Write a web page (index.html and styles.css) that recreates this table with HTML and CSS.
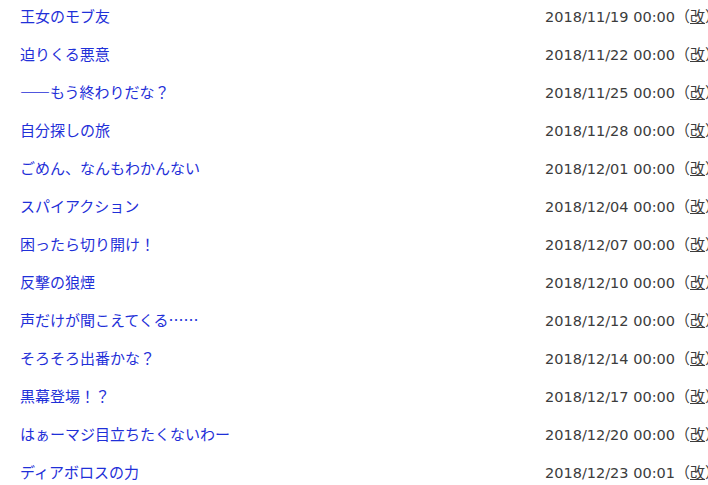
FILE: index.html
```html
<!DOCTYPE html>
<html lang="ja">
<head>
    <meta charset="UTF-8">
    <title>目次</title>
    <link rel="stylesheet" href="styles.css">
</head>
<body>
    <div class="index-box">
        <dl class="chapter"><dd class="subtitle"><a href="#">王女のモブ友</a></dd><dt class="update">2018/11/19 00:00<span class="kai">（<u>改</u>）</span></dt></dl>
        <dl class="chapter"><dd class="subtitle"><a href="#">迫りくる悪意</a></dd><dt class="update">2018/11/22 00:00<span class="kai">（<u>改</u>）</span></dt></dl>
        <dl class="chapter"><dd class="subtitle"><a href="#">――もう終わりだな？</a></dd><dt class="update">2018/11/25 00:00<span class="kai">（<u>改</u>）</span></dt></dl>
        <dl class="chapter"><dd class="subtitle"><a href="#">自分探しの旅</a></dd><dt class="update">2018/11/28 00:00<span class="kai">（<u>改</u>）</span></dt></dl>
        <dl class="chapter"><dd class="subtitle"><a href="#">ごめん、なんもわかんない</a></dd><dt class="update">2018/12/01 00:00<span class="kai">（<u>改</u>）</span></dt></dl>
        <dl class="chapter"><dd class="subtitle"><a href="#">スパイアクション</a></dd><dt class="update">2018/12/04 00:00<span class="kai">（<u>改</u>）</span></dt></dl>
        <dl class="chapter"><dd class="subtitle"><a href="#">困ったら切り開け！</a></dd><dt class="update">2018/12/07 00:00<span class="kai">（<u>改</u>）</span></dt></dl>
        <dl class="chapter"><dd class="subtitle"><a href="#">反撃の狼煙</a></dd><dt class="update">2018/12/10 00:00<span class="kai">（<u>改</u>）</span></dt></dl>
        <dl class="chapter"><dd class="subtitle"><a href="#">声だけが聞こえてくる……</a></dd><dt class="update">2018/12/12 00:00<span class="kai">（<u>改</u>）</span></dt></dl>
        <dl class="chapter"><dd class="subtitle"><a href="#">そろそろ出番かな？</a></dd><dt class="update">2018/12/14 00:00<span class="kai">（<u>改</u>）</span></dt></dl>
        <dl class="chapter"><dd class="subtitle"><a href="#">黒幕登場！？</a></dd><dt class="update">2018/12/17 00:00<span class="kai">（<u>改</u>）</span></dt></dl>
        <dl class="chapter"><dd class="subtitle"><a href="#">はぁーマジ目立ちたくないわー</a></dd><dt class="update">2018/12/20 00:00<span class="kai">（<u>改</u>）</span></dt></dl>
        <dl class="chapter"><dd class="subtitle"><a href="#">ディアボロスの力</a></dd><dt class="update">2018/12/23 00:01<span class="kai">（<u>改</u>）</span></dt></dl>
    </div>
</body>
</html>
```

FILE: styles.css
```css
html, body {
    margin: 0;
    padding: 0;
    overflow: hidden;
    background-color: #fff;
}
body {
    font-family: "Noto Sans CJK JP", "Noto Sans", sans-serif;
    font-size: 15px;
}
.index-box {
    width: 740px;
    margin-top: -4px;
}
.chapter {
    display: flex;
    justify-content: space-between;
    align-items: center;
    height: 38px;
    margin: 0;
    padding-left: 20px;
}
.subtitle {
    margin: 0;
}
.subtitle a {
    color: #1f30d8;
    text-decoration: none;
}
.update {
    width: 195px;
    color: #3c3c3c;
    font-family: "DejaVu Sans", "Noto Sans CJK JP", sans-serif;
    font-size: 14.5px;
    white-space: nowrap;
}
.kai {
    font-family: "Noto Sans CJK JP", sans-serif;
    font-size: 15px;
}
.kai u {
    text-decoration: underline;
}
```
